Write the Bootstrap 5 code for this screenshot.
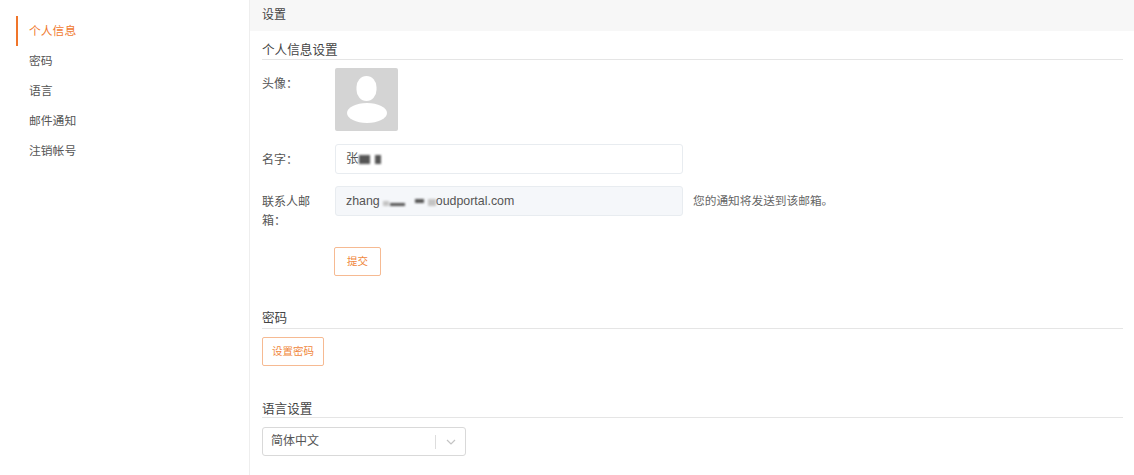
<!DOCTYPE html>
<html lang="zh">
<head>
<meta charset="utf-8">
<title>设置</title>
<link rel="stylesheet" href="https://cdn.jsdelivr.net/npm/bootstrap@5.3.0/dist/css/bootstrap.min.css">
<style>
html,body{height:475px;overflow:hidden}
body{font-family:"Liberation Sans","Noto Sans CJK SC",sans-serif;font-size:12px;color:#555;background:#fff}
.shell{height:475px}
.side{width:250px;flex:none;border-right:1px solid #eee;padding:16px 0 0 16px}
.side-item{height:29.9px;line-height:30px;padding-left:12px;font-size:11.8px;color:#555;border-left:1px solid transparent;display:block;text-decoration:none}
.side-item.on{color:#f07a2f;border-left:2px solid #f0752a;padding-left:11px}
.main{flex:1;min-width:0}
.top-bar{height:31px;line-height:31px;background:#f7f7f7;padding-left:12px;font-size:12px;color:#444}
.body-pad{padding:0 11px 0 12px}
.sec-title{font-size:12.6px;line-height:18px;color:#444;border-bottom:1px solid #e5e5e5}
.sec-a{margin-top:10px;height:19px}
.sec-b{margin-top:33px;height:20px;padding-top:0}
.sec-c{margin-top:33px;height:19px;padding-top:1px}
.lab{width:73px;flex:none;font-size:12px;line-height:19px;padding-top:7px;color:#555}
.pic{width:63px;height:63px;background:#d4d4d4;border-radius:2px}
.pic svg{display:block}
.field{width:348px;height:30px;border:1px solid #e8ecf0;border-radius:3px;padding:0 10px;font-size:12.4px;line-height:28px;color:#555;background:#fff}
.field.off{background:#f5f7fa}
.hint{font-size:11.7px;color:#666;margin-left:10px;line-height:30px}
.smear{display:inline-block;height:6px;background:#555;vertical-align:-1px;filter:blur(.8px)}
.smear.lite{background:#c4c4c4}
.ghost-btn{height:29px;padding:0 9px;border:1px solid #f6ba92;border-radius:2px;background:#fff;color:#f0873d;font-size:10.5px;line-height:27px}
.picker{width:204px;height:29px;border:1px solid #d9d9d9;border-radius:3px;padding:0 0 0 8px;font-size:12px;line-height:27px;color:#555}
.picker-sep{width:1px;height:14px;background:#ddd}
.picker-arrow{width:29px}
</style>
</head>
<body>
<div class="d-flex shell">
  <nav class="side">
    <a class="side-item on" href="#">个人信息</a>
    <a class="side-item" href="#">密码</a>
    <a class="side-item" href="#">语言</a>
    <a class="side-item" href="#">邮件通知</a>
    <a class="side-item" href="#">注销帐号</a>
  </nav>
  <main class="main">
    <div class="top-bar">设置</div>
    <div class="body-pad">
      <div class="sec-title sec-a">个人信息设置</div>
      <div class="d-flex" style="margin-top:8px">
        <div class="lab">头像：</div>
        <div class="pic">
          <svg width="63" height="63" viewBox="0 0 63 63"><rect x="21.5" y="8" width="20" height="25" rx="10" ry="11" fill="#fff"/><rect x="12" y="35" width="40" height="20" rx="20" ry="10" fill="#fff"/></svg>
        </div>
      </div>
      <div class="d-flex" style="margin-top:13px">
        <div class="lab">名字：</div>
        <div class="field">张<span class="smear" style="width:11px;height:9px;margin-left:1px"></span><span class="smear" style="width:6px;height:9px;margin-left:5px"></span></div>
      </div>
      <div class="d-flex" style="margin-top:12px">
        <div class="lab" style="padding-right:18px">联系人邮箱：</div>
        <div class="field off">zhang<span class="smear lite" style="width:6px;height:5px;margin-left:3px"></span><span class="smear" style="width:15px;height:3px;margin-left:1px"></span><span class="smear" style="width:9px;height:4px;margin-left:10px;vertical-align:2px"></span><span class="smear lite" style="width:8px;height:7px;margin-left:4px"></span>oudportal.com</div>
        <div class="hint">您的通知将发送到该邮箱。</div>
      </div>
      <button type="button" class="btn ghost-btn d-block" style="margin:16px 0 0 72px;padding:0 12px">提交</button>
      <div class="sec-title sec-b">密码</div>
      <button type="button" class="btn ghost-btn d-block" style="margin-top:8px">设置密码</button>
      <div class="sec-title sec-c">语言设置</div>
      <div class="picker d-flex align-items-center justify-content-between" style="margin-top:9px">
        <span>简体中文</span>
        <span class="d-flex align-items-center">
          <span class="picker-sep"></span>
          <span class="picker-arrow d-flex justify-content-center">
            <svg width="10" height="6" viewBox="0 0 10 6"><path d="M1 1l4 4 4-4" fill="none" stroke="#c4c4c4" stroke-width="1.2"/></svg>
          </span>
        </span>
      </div>
    </div>
  </main>
</div>
<script src="https://cdn.jsdelivr.net/npm/bootstrap@5.3.0/dist/js/bootstrap.bundle.min.js"></script>
</body>
</html>
